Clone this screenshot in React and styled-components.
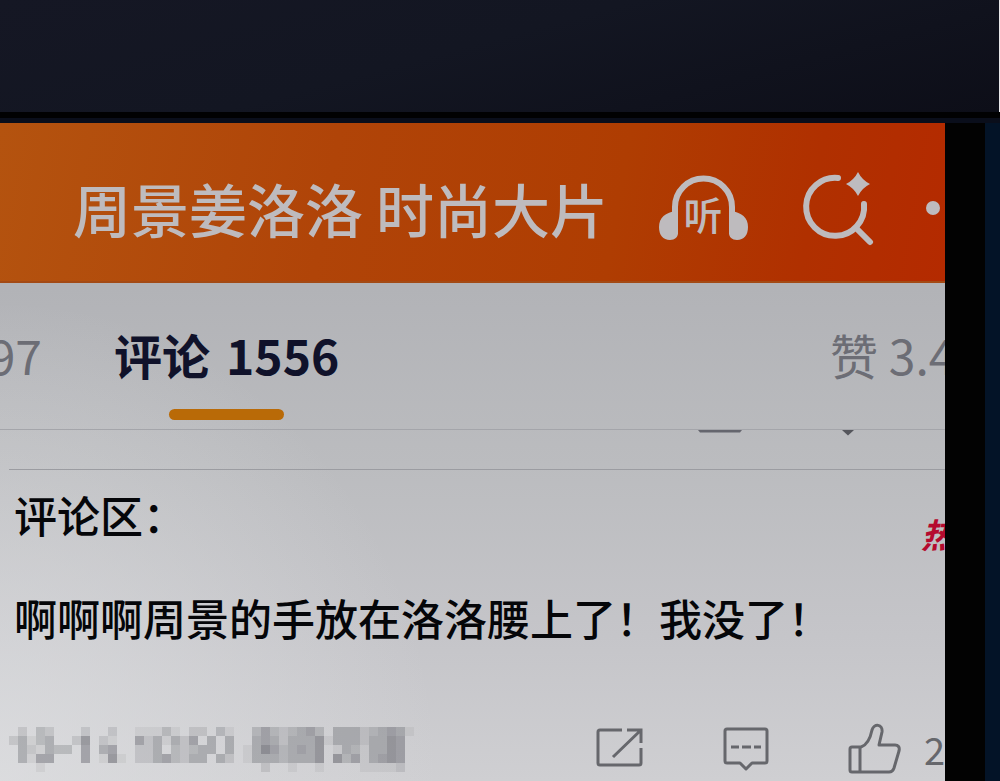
import React from "react";
import styled, { createGlobalStyle } from "styled-components";

const GlobalStyle = createGlobalStyle`
  * {
    box-sizing: border-box;
  }

  body {
    margin: 0;
    background-color: #020203;
    font-family: "Noto Sans CJK SC", sans-serif;
  }

  button {
    display: flex;
    align-items: center;
    flex-shrink: 0;
    padding: 0;
    border: none;
    background: none;
    color: inherit;
    font: inherit;
    cursor: pointer;
  }

  svg {
    display: block;
    flex-shrink: 0;
  }
`;

const Page = styled.div`
  display: flex;
  flex-direction: column;
  min-height: 100vh;
  overflow: hidden;
`;

const Wall = styled.div`
  height: 112px;
  border-right: 1px solid #e8e8ea;
  background: linear-gradient(165deg, #151724 0%, #131622 45%, #0d0e18 100%);
`;

const TopBezel = styled.div`
  height: 11px;
  border-top: 6px solid #010102;
  background-color: #0a0e1b;
`;

const Device = styled.div`
  display: flex;
  flex: 1;
`;

const Screen = styled.main`
  display: flex;
  flex-direction: column;
  flex: 1;
  min-width: 0;
  overflow: hidden;
  background: radial-gradient(
      ellipse 440px 480px at 0% 100%,
      rgba(224, 225, 227, 0.7),
      rgba(224, 225, 227, 0)
    ),
    linear-gradient(180deg, #b2b3b7 25%, #bbbcbf 52%, #c5c5c9 78%, #cfcfd2 100%);
`;

const SideBezel = styled.div`
  width: 55px;
  border-right: 15px solid #031327;
  background-color: #020202;
`;

const Header = styled.header`
  display: flex;
  align-items: center;
  height: 160px;
  padding: 12px 5px 0 73px;
  border-bottom: 2px solid #a34a15;
  color: #bebbbe;
  background: linear-gradient(
    100deg,
    #b4530f 0%,
    #b04408 35%,
    #af3d02 65%,
    #b03000 85%,
    #b42a00 100%
  );
`;

const Title = styled.h1`
  margin: 0;
  font-size: 58px;
  font-weight: 500;
  line-height: 72px;
  white-space: nowrap;
`;

const HeaderActions = styled.div`
  display: flex;
  align-items: center;
  gap: 50px;
  margin-left: auto;
`;

const Tabs = styled.nav`
  display: flex;
  align-items: flex-start;
  height: 147px;
  padding-top: 38px;
  border-bottom: 1px solid #a4a5aa;
`;

const Tab = styled.button`
  && {
    flex-direction: column;
    gap: 22px;
    color: ${(props) => (props.$active ? "#10122a" : "#6c6d75")};
    font-size: 48px;
    font-weight: ${(props) => (props.$active ? 700 : 400)};
    line-height: 66px;
    white-space: nowrap;
  }
`;

const TabLabel = styled.span`
  display: flex;
  gap: 16px;
`;

const PreviousTab = styled(Tab)`
  && {
    align-items: flex-end;
    width: 42px;
    margin-right: 72px;
  }
`;

const LikesTab = styled(Tab)`
  && {
    align-items: flex-start;
    width: 115px;
    margin-left: auto;
  }
`;

const Indicator = styled.span`
  width: 115px;
  height: 11px;
  border-radius: 6px;
  background-color: #b96a07;
`;

const CutRow = styled.div`
  display: flex;
  justify-content: flex-end;
  gap: 100px;
  height: 40px;
  margin-left: 9px;
  padding-right: 91px;
  border-bottom: 1px solid #9b9ca1;
`;

const Comments = styled.section`
  display: flex;
  flex-direction: column;
  padding: 14px 0 0 9px;
  color: #050609;
  font-size: 43px;
  font-weight: 500;
  line-height: 60px;
  white-space: nowrap;
`;

const CommentsHead = styled.div`
  display: flex;
  align-items: flex-start;
  justify-content: space-between;
  height: 60px;
  margin-bottom: 43px;
  padding-left: 5px;
`;

const CommentsTitle = styled.h2`
  margin: 0;
  font: inherit;
`;

const HotMark = styled.span`
  width: 24px;
  padding-top: 20px;
  color: #b50a2e;
  font-size: 34px;
  font-style: italic;
  font-weight: 700;
  line-height: 60px;
`;

const CommentText = styled.p`
  margin: 0;
  padding-left: 5px;
`;

const Meta = styled.footer`
  display: flex;
  align-items: center;
  justify-content: space-between;
  height: 60px;
  margin-top: 72px;
`;

const Actions = styled.div`
  display: flex;
  align-items: center;
  gap: 79px;
  color: #66676c;
`;

const LikeButton = styled.button`
  && {
    gap: 22px;
    font-size: 38px;
    font-weight: 400;
    line-height: 60px;
  }
`;

// each digit is the darkness of one mosaic cell
const MOSAIC = [
  "020320002002001113102203100353234530444234541",
  "241340026021005241425040400454244461444244650",
  "042143305045002240323440401475345460143144650",
  "041550005016102245324404201444344460635145650",
  "000100000000000000000000000020010010000111120",
];

const HeadphoneIcon = () => (
  <svg width="95" height="76" viewBox="0 0 95 76" aria-hidden="true">
    <path
      d="M20 64V37a28.500 28.500 0 0 1 57 0v27"
      fill="none"
      stroke="currentColor"
      strokeWidth="6"
    />
    <path
      d="M22 41C10 42 4 48 4 57c0 8 4 13 11 13 5 0 8-3 8-7V41zM75 41c12 1 18 7 18 16 0 8-4 13-11 13-5 0-8-3-8-7V41z"
      fill="currentColor"
    />
    <text x="48" y="60" textAnchor="middle" fontSize="39" fontWeight="500" fill="currentColor">
      听
    </text>
  </svg>
);

const SearchIcon = () => (
  <svg width="76" height="76" viewBox="0 0 76 76" aria-hidden="true">
    <g fill="none" stroke="currentColor" strokeWidth="6" strokeLinecap="round">
      <path d="M38 8A29 29 0 1 0 64 34" />
      <path d="M56 58l14 14" />
    </g>
    <path d="M58 2q4 8 12 12-8 4-12 12-4-8-12-12 8-4 12-12z" fill="currentColor" />
  </svg>
);

const DotIcon = () => (
  <svg width="14" height="76" viewBox="0 0 14 76" aria-hidden="true">
    <circle cx="7" cy="38" r="7" fill="currentColor" />
  </svg>
);

const CutIcons = () => (
  <>
    <svg width="44" height="6" viewBox="0 0 44 6" aria-hidden="true">
      <path d="M0 0h44l-2 2.500H2z" fill="#65666e" />
    </svg>
    <svg width="12" height="6" viewBox="0 0 12 6" aria-hidden="true">
      <path d="M0 0h12L6 5.500z" fill="#55565c" />
    </svg>
  </>
);

const ShareIcon = () => (
  <svg
    width="48"
    height="48"
    viewBox="0 0 48 48"
    fill="none"
    stroke="currentColor"
    strokeWidth="3"
    aria-hidden="true"
  >
    <path d="M26 5H4a2 2 0 0 0-2 2v31a2 2 0 0 0 2 2h39a2 2 0 0 0 2-2V23" />
    <path d="M31 5h14v13M45 5L17 32" />
  </svg>
);

const CommentIcon = () => (
  <svg
    width="46"
    height="48"
    viewBox="0 0 46 48"
    fill="none"
    stroke="currentColor"
    strokeWidth="3"
    strokeLinejoin="round"
    aria-hidden="true"
  >
    <path d="M4 4h38a2 2 0 0 1 2 2v30a2 2 0 0 1-2 2H29l-6 6-6-6H4a2 2 0 0 1-2-2V6a2 2 0 0 1 2-2z" />
    <path d="M8 22h8M19 22h9M31 22h7" strokeWidth="3" />
  </svg>
);

const LikeIcon = () => (
  <svg
    width="54"
    height="54"
    viewBox="0 0 54 54"
    fill="none"
    stroke="currentColor"
    strokeWidth="3"
    strokeLinejoin="round"
    aria-hidden="true"
  >
    <path d="M12 25H4a2 2 0 0 0-2 2v21a2 2 0 0 0 2 2h37c3 0 4-1 5-4l5-17c1-4-1-6-4-6H31l3-13c1-8-8-9-10-2-2 10-5 15-11 17zM12 25v25" />
  </svg>
);

const BlurredInfo = () => (
  <svg width="405" height="45" viewBox="0 0 405 45" role="img" aria-label="已打码">
    {MOSAIC.map((row, y) =>
      row.split("").map((level, x) => (
        <rect
          key={`${x}-${y}`}
          x={x * 9}
          y={y * 9}
          width="9"
          height="9"
          fill="#55565e"
          fillOpacity={Number(level) * 0.08}
          shapeRendering="crispEdges"
        />
      ))
    )}
  </svg>
);

const App = () => {
  return (
    <Page>
      <GlobalStyle />
      <Wall />
      <TopBezel />
      <Device>
        <Screen>
          <Header>
            <Title>周景姜洛洛 时尚大片</Title>
            <HeaderActions>
              <button type="button" aria-label="听">
                <HeadphoneIcon />
              </button>
              <button type="button" aria-label="搜索">
                <SearchIcon />
              </button>
              <button type="button" aria-label="更多">
                <DotIcon />
              </button>
            </HeaderActions>
          </Header>
          <Tabs>
            <PreviousTab type="button">97</PreviousTab>
            <Tab type="button" $active>
              <TabLabel>
                <span>评论</span>
                <span>1556</span>
              </TabLabel>
              <Indicator />
            </Tab>
            <LikesTab type="button">赞 3.4</LikesTab>
          </Tabs>
          <CutRow>
            <CutIcons />
          </CutRow>
          <Comments>
            <CommentsHead>
              <CommentsTitle>评论区：</CommentsTitle>
              <HotMark>热</HotMark>
            </CommentsHead>
            <CommentText>啊啊啊周景的手放在洛洛腰上了！我没了！</CommentText>
            <Meta>
              <BlurredInfo />
              <Actions>
                <button type="button" aria-label="转发">
                  <ShareIcon />
                </button>
                <button type="button" aria-label="评论">
                  <CommentIcon />
                </button>
                <LikeButton type="button" aria-label="赞 2">
                  <LikeIcon />2
                </LikeButton>
              </Actions>
            </Meta>
          </Comments>
        </Screen>
        <SideBezel />
      </Device>
    </Page>
  );
};

export default App;
